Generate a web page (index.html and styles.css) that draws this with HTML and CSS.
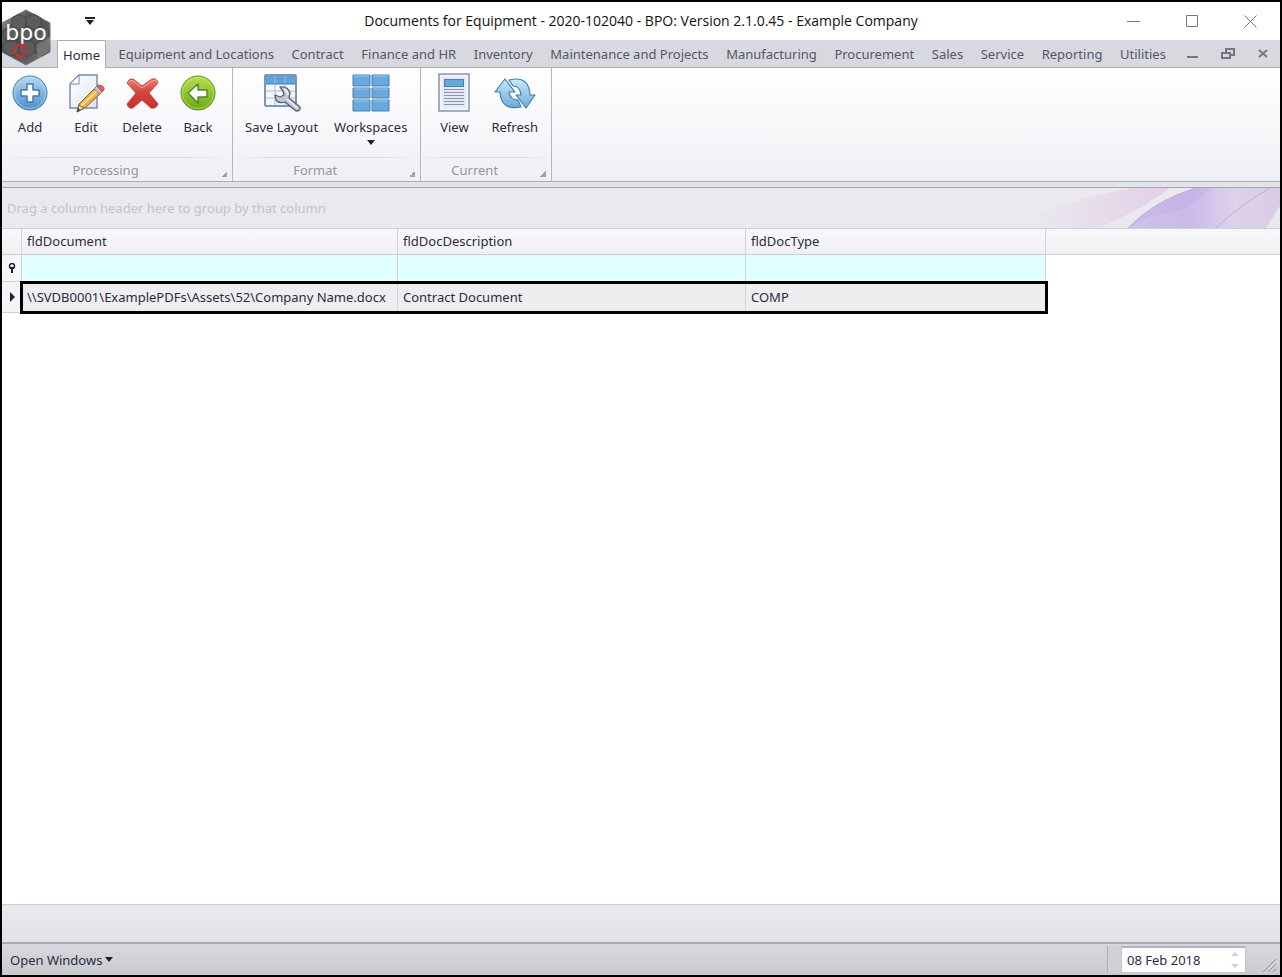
FILE: index.html
```html
<!DOCTYPE html>
<html lang="en">
  <head>
    <meta charset="UTF-8" />
    <meta name="viewport" content="width=device-width, initial-scale=1.0" />
    <title>Documents for Equipment</title>
    <link rel="stylesheet" href="styles.css">
  </head>
  <body>
    <div class="window">
      <header class="titlebar">
        <svg class="logo" viewBox="0 0 50 58">
          <defs>
            <linearGradient id="hex" x1="0" y1="0" x2="1" y2="1">
              <stop offset="0" stop-color="#999" />
              <stop offset="0.4" stop-color="#484848" />
              <stop offset="1" stop-color="#777" />
            </linearGradient>
          </defs>
          <path d="M24 1L48 14V43L24 56L0 43V14Z" fill="url(#hex)" stroke="#777" />
          <g fill="#5c5c5c" stroke="#484848">
            <path d="M17 5l7 4v8l-7 4l-7-4v-8zM32 5l7 4v8l-7 4l-8-4v-8zM9 31l8 4v8l-8 4l-8-5v-7zM25 31l8 4v8l-8 5l-8-5v-8zM40 31l7 4v8l-7 4l-7-4v-8zM9 17l7 4v8l-7 4l-8-4v-8zM25 17l7 4v8l-7 4l-8-4v-8zM40 17l7 4v8l-7 4l-7-4v-8z" />
          </g>
          <path d="M24 56L48 43V27L35 36V50Z" fill="#999" opacity="0.4" />
          <text class="logo-text" x="24" y="31">bpo</text>
          <path d="M18 35l6 3v6l-6 4l-5-4v-6z" fill="none" stroke="#d12a2d" stroke-width="2" />
        </svg>
        <button class="quick" aria-label="Customize toolbar">
          <svg width="10" height="8"><path d="M0 1h10" stroke="#1f1f35" stroke-width="2" /><path d="M1 3h8L5 8z" fill="#1f1f35" /></svg>
        </button>
        <h1>Documents for Equipment - 2020-102040 - BPO: Version 2.1.0.45 - Example Company</h1>
        <div class="window-buttons">
          <button aria-label="Minimize"><svg width="13" height="13"><path d="M0 6.500h13" /></svg></button>
          <button aria-label="Maximize"><svg width="13" height="13"><path d="M.5.5h11v11H.5z" /></svg></button>
          <button aria-label="Close"><svg width="13" height="13"><path d="M.5.5l12 12M12.500.5l-12 12" /></svg></button>
        </div>
      </header>

      <nav class="tabs">
        <div class="tab-list">
          <a class="tab active" href="#">Home</a>
          <a class="tab" href="#">Equipment and Locations</a>
          <a class="tab" href="#">Contract</a>
          <a class="tab" href="#">Finance and HR</a>
          <a class="tab" href="#">Inventory</a>
          <a class="tab" href="#">Maintenance and Projects</a>
          <a class="tab" href="#">Manufacturing</a>
          <a class="tab" href="#">Procurement</a>
          <a class="tab" href="#">Sales</a>
          <a class="tab" href="#">Service</a>
          <a class="tab" href="#">Reporting</a>
          <a class="tab" href="#">Utilities</a>
        </div>
        <div class="child-buttons">
          <button aria-label="Minimize document"><svg width="14" height="12"><path d="M1 9h11" /></svg></button>
          <button aria-label="Restore document"><svg width="14" height="12"><path d="M5 4V1h8v6H9M1 5h8v5H1z" /></svg></button>
          <button aria-label="Close document"><svg width="14" height="12"><path d="M3 2l8 7M11 2L3 9" /></svg></button>
        </div>
      </nav>

      <section class="ribbon">
        <div class="group">
          <div class="tools">
            <button class="tool">
              <svg viewBox="0 0 36 36">
                <defs><linearGradient id="blue" x1="0" y1="0" x2="0" y2="1"><stop offset="0" stop-color="#b5daf2" /><stop offset="1" stop-color="#4a8dce" /></linearGradient></defs>
                <circle cx="18" cy="18" r="17" fill="url(#blue)" stroke="#477eb0" />
                <circle cx="18" cy="18" r="15.500" fill="none" stroke="#c3e2f5" opacity="0.6" />
                <path d="M15 9h6v6h6v6h-6v6h-6v-6H9v-6h6z" fill="#fff" stroke="#4479aa" stroke-width="1.500" stroke-linejoin="round" />
              </svg>
              <span>Add</span>
            </button>
            <button class="tool">
              <svg viewBox="0 0 36 36">
                <defs><linearGradient id="paper" x1="0" y1="0" x2="1" y2="1"><stop offset="0" stop-color="#fff" /><stop offset="1" stop-color="#dde5f4" /></linearGradient></defs>
                <path d="M11 0h18v33H2V9z" fill="url(#paper)" stroke="#7486b5" stroke-width="1.400" />
                <path d="M11 0v9H2z" fill="#fff" stroke="#7486b5" />
                <path d="M9 37l2-8L27 13l6 5L17 33z" fill="#edab42" stroke="#8c642a" />
                <path d="M13 31L29 16" stroke="#ffdf93" stroke-width="2" />
                <path d="M26 14l3-3l6 5l-3 3z" fill="#b9c8df" stroke="#7282a1" />
                <path d="M29 11l2-1q6 1 5 5l-2 2z" fill="#df6553" stroke="#bd4e43" />
                <path d="M11 30l5 3l-7 4z" fill="#efd6ad" stroke="#776653" />
                <path d="M9 37l1-4l2 2z" fill="#333" />
              </svg>
              <span>Edit</span>
            </button>
            <button class="tool">
              <svg viewBox="0 0 36 36">
                <defs><linearGradient id="red" x1="0" y1="0" x2="0" y2="1"><stop offset="0" stop-color="#ed7e72" /><stop offset="0.450" stop-color="#d4453e" /><stop offset="1" stop-color="#c72f2b" /></linearGradient></defs>
                <path d="M3 8Q5 3 9 4L18 11L28 4Q33 3 34 8L25 18L34 29Q32 34 27 33L18 25L9 33Q4 34 3 29L12 18Z" fill="url(#red)" stroke="#bd4943" />
                <path d="M4 8Q6 4 9 6l9 7l10-7q4-2 5 2" fill="none" stroke="#f3a99e" />
              </svg>
              <span>Delete</span>
            </button>
            <button class="tool">
              <svg viewBox="0 0 36 36">
                <defs><linearGradient id="green" x1="0" y1="0" x2="0" y2="1"><stop offset="0" stop-color="#b7df52" /><stop offset="1" stop-color="#68a815" /></linearGradient></defs>
                <circle cx="18" cy="18" r="17" fill="url(#green)" stroke="#659425" />
                <circle cx="18" cy="18" r="15.500" fill="none" stroke="#cdea78" opacity="0.6" />
                <path d="M8 18L18 9v6h9v7h-9v6z" fill="#fff" stroke="#55831b" stroke-width="1.400" stroke-linejoin="round" />
              </svg>
              <span>Back</span>
            </button>
          </div>
          <div class="group-name"><span>Processing</span><button aria-label="Processing options"></button></div>
        </div>

        <div class="group">
          <div class="tools">
            <button class="tool">
              <svg viewBox="0 0 36 36">
                <rect x="1" y="0" width="31" height="31" rx="1" fill="#f4f7fc" stroke="#5473a4" stroke-width="1.500" />
                <path d="M2 1h29v8H2z" fill="#5ea3d9" />
                <path d="M2 16h29M2 23h29M11 1v29M21 1v29" stroke="#a9bbd8" />
                <path d="M2 9h29" stroke="#477eb4" />
                <path d="M16 12q8-1 10 6l-1 5l11 9q1 4-4 4L21 27q-6 2-9-2l-1-5l5 2l4-2l-1-4z" fill="#c3c9d2" stroke="#59616f" stroke-width="1.300" stroke-linejoin="round" />
                <path d="M23 24l10 9M20 14q4 2 4 6" fill="none" stroke="#eef1f4" stroke-width="1.500" />
              </svg>
              <span>Save Layout</span>
            </button>
            <button class="tool">
              <svg viewBox="0 0 36 36">
                <path d="M0 0h17v11H0zM19 0h17v11H19zM0 13h17v10H0zM19 13h17v10H19zM0 25h17v11H0zM19 25h17v11H19z" fill="#69a8da" stroke="#477fb7" />
                <path d="M1 1h15M20 1h15M1 14h15M20 14h15M1 26h15M20 26h15" stroke="#9acbea" />
              </svg>
              <span>Workspaces</span>
              <i class="caret"></i>
            </button>
          </div>
          <div class="group-name"><span>Format</span><button aria-label="Format options"></button></div>
        </div>

        <div class="group">
          <div class="tools">
            <button class="tool">
              <svg viewBox="0 0 36 36">
                <rect x="3" y="-1" width="30" height="37" fill="#e4e9f3" stroke="#8995b4" stroke-width="1.500" />
                <rect x="5" y="1" width="26" height="33" fill="none" stroke="#fff" />
                <rect x="8.500" y="4.500" width="19" height="7" fill="#64a9dc" stroke="#4583b5" />
                <path d="M8 14.500h20M8 17.500h20M8 20.500h20M8 23.500h20M8 26.500h20M8 29.500h20" stroke="#8892ae" />
              </svg>
              <span>View</span>
            </button>
            <button class="tool">
              <svg class="refresh" viewBox="0 0 40 36">
                <defs><linearGradient id="sky" x1="0" y1="0" x2="0" y2="1"><stop offset="0" stop-color="#c9e9f8" /><stop offset="1" stop-color="#6bacd9" /></linearGradient></defs>
                <g fill="url(#sky)" stroke="#477fae" stroke-width="1.200" stroke-linejoin="round">
                  <path d="M10 4L20 17H14Q15 25 23 25L26 32Q6 36 5 17H0Z" />
                  <path d="M31 33L21 20H26Q25 11 18 11L14 5Q34 0 35 20H40Z" />
                </g>
              </svg>
              <span>Refresh</span>
            </button>
          </div>
          <div class="group-name"><span>Current</span><button aria-label="Current options"></button></div>
        </div>
      </section>

      <main class="grid">
        <div class="group-panel">
          <span>Drag a column header here to group by that column</span>
          <svg class="ribbons" viewBox="0 0 280 40" preserveAspectRatio="none" aria-hidden="true">
            <defs>
              <linearGradient id="pink" x1="0" x2="1"><stop offset="0.200" stop-color="#e9e9ee" /><stop offset="1" stop-color="#e4cfe7" /></linearGradient>
              <linearGradient id="violet" x1="0" x2="1"><stop offset="0" stop-color="#cfc3eb" /><stop offset="0.400" stop-color="#cbb9e8" /><stop offset="0.700" stop-color="#ddd2ea" /><stop offset="1" stop-color="#dacbe6" /></linearGradient>
            </defs>
            <path d="M0 40Q70 12 130 0h40Q132 28 96 40z" fill="url(#pink)" />
            <path d="M128 40Q155 12 196 0h84v18l-14 22z" fill="url(#violet)" />
            <path d="M150 29Q190 24 211 0h-17Q157 12 128 40z" fill="#bea7e4" opacity="0.3" />
            <path d="M216 40Q241 16 270 0M128 40Q155 12 196 0" fill="none" stroke="#c3aadc" />
          </svg>
        </div>
        <table>
          <colgroup>
            <col class="col-indicator"><col class="col-document"><col class="col-description"><col class="col-type"><col>
          </colgroup>
          <thead>
            <tr><th></th><th>fldDocument</th><th>fldDocDescription</th><th>fldDocType</th><th class="rest"></th></tr>
          </thead>
          <tbody>
            <tr class="filter">
              <td class="indicator"><svg width="8" height="10"><circle cx="4" cy="3" r="2.500" fill="none" stroke="#1f1f35" stroke-width="1.500" /><path d="M1 4h6L4 7z" fill="#1f1f35" /><path d="M4 5v5" stroke="#1f1f35" stroke-width="2" /></svg></td>
              <td><input aria-label="Filter fldDocument"></td>
              <td><input aria-label="Filter fldDocDescription"></td>
              <td><input aria-label="Filter fldDocType"></td>
              <td class="rest"></td>
            </tr>
            <tr class="selected">
              <td class="indicator"><svg width="8" height="10"><path d="M2 0l5 5l-5 5z" fill="#1f1f35" /></svg></td>
              <td>\\SVDB0001\ExamplePDFs\Assets\52\Company Name.docx</td>
              <td>Contract Document</td>
              <td>COMP</td>
              <td class="rest"></td>
            </tr>
          </tbody>
        </table>
      </main>

      <div class="bottom-panel"></div>
      <footer class="statusbar">
        <button class="open-windows">Open Windows <i class="caret"></i></button>
        <div class="date">
          <input type="text" value="08 Feb 2018" aria-label="Date">
          <div class="spin">
            <button aria-label="Next day"></button>
            <button aria-label="Previous day"></button>
          </div>
        </div>
        <svg class="grip" width="15" height="15"><path d="M1 14L14 1M6 14l8-8M11 14l3-3" /></svg>
      </footer>
    </div>
  </body>
</html>
```
FILE: styles.css
```css
* {
  box-sizing: border-box;
}

body {
  margin: 0;
  font-family: "Noto Sans", "Open Sans", sans-serif;
  font-size: 13px;
  color: #2b2b42;
}

button,
input {
  font: inherit;
  color: inherit;
  background: none;
  border: none;
  padding: 0;
  margin: 0;
}

svg {
  display: block;
}

.window {
  display: flex;
  flex-direction: column;
  height: 100vh;
  border: 2px solid #000;
  background: #fff;
}

/* title bar */
.titlebar {
  position: relative;
  display: grid;
  grid-template-columns: 176px 1fr 176px;
  align-items: center;
  height: 38px;
}

.titlebar h1 {
  margin: 0;
  padding-bottom: 2px;
  font-family: "Open Sans", sans-serif;
  font-size: 14px;
  font-weight: normal;
  text-align: center;
  white-space: nowrap;
  color: #111;
}

.logo {
  position: absolute;
  left: 0;
  top: 7px;
  width: 50px;
  height: 58px;
  z-index: 1;
}

.logo-text {
  font-family: "DejaVu Sans", sans-serif;
  font-size: 22px;
  text-anchor: middle;
  fill: #fff;
}

.quick {
  justify-self: center;
}

.window-buttons {
  display: flex;
}

.window-buttons button {
  display: flex;
  flex: 1;
  justify-content: center;
}

.window-buttons path {
  fill: none;
  stroke: #777;
}

/* tabs */
.tabs {
  display: flex;
  justify-content: space-between;
  height: 28px;
  padding-left: 55px;
  background: #d8d9df;
  border-bottom: 1px solid #acadb9;
}

.tab-list {
  display: flex;
  flex: 1;
  justify-content: space-between;
  max-width: 1114px;
}

.tab {
  padding: 0 5px;
  line-height: 28px;
  color: #55556b;
  text-decoration: none;
  white-space: nowrap;
}

.tab.active {
  height: 28px;
  background: #fff;
  border: 1px solid #acadb9;
  border-bottom: none;
  color: #2b2b42;
}

.child-buttons {
  display: flex;
  align-items: center;
  gap: 21px;
  padding-right: 10px;
}

.child-buttons path {
  fill: none;
  stroke: #74758a;
  stroke-width: 2;
}

/* ribbon */
.ribbon {
  display: flex;
  height: 114px;
  background: linear-gradient(#fff, #f8f8fb 50%, #efeff4);
  border-bottom: 1px solid #a9abb2;
}

.group {
  display: flex;
  flex-direction: column;
  border-right: 1px solid #b5b6c2;
}

.tools {
  display: flex;
  flex: 1;
  gap: 2px;
  padding: 7px 6px 0 5px;
}

.group:first-child .tools {
  gap: 0;
  padding-left: 0;
}

.tool {
  display: flex;
  flex-direction: column;
  align-items: center;
  min-width: 56px;
  padding: 0 7px;
  white-space: nowrap;
}

.tool svg {
  width: 36px;
  height: 36px;
  overflow: visible;
}

.tool .refresh {
  width: 40px;
}

.tool span {
  margin-top: 7px;
  line-height: 18px;
}

.caret {
  border: 4px solid transparent;
  border-top: 5px solid #1f1f35;
  border-bottom: none;
}

.tool .caret {
  margin-top: 4px;
}

.group-name {
  display: flex;
  height: 24px;
  line-height: 24px;
  text-align: center;
  color: #93949f;
  border-top: 1px solid;
  border-image: linear-gradient(90deg, transparent, #dcdde3 20%, #dcdde3 80%, transparent) 1;
}

.group-name span {
  flex: 1;
}

.group-name button {
  align-self: flex-end;
  width: 6px;
  height: 6px;
  margin: 0 5px 4px 12px;
  background: linear-gradient(135deg, transparent 50%, #a0a1aa 50%);
}

/* data grid */
.grid {
  flex: 1;
  border-top: 1px solid #a4a6ae;
  margin-top: 5px;
  box-shadow: 0 -5px #e3e4e8;
}

.group-panel {
  display: flex;
  align-items: center;
  justify-content: space-between;
  height: 40px;
  padding-left: 5px;
  background: #e9e9ee;
  color: #c2c3cc;
}

.ribbons {
  width: 280px;
  height: 40px;
}

table {
  width: 100%;
  table-layout: fixed;
  border-collapse: separate;
  border-spacing: 0;
}

.col-indicator {
  width: 20px;
}

.col-document {
  width: 376px;
}

.col-description {
  width: 348px;
}

.col-type {
  width: 300px;
}

th,
td {
  height: 27px;
  padding: 0 5px;
  text-align: left;
  font-weight: normal;
  white-space: nowrap;
  border-right: 1px solid #d0d1dc;
  border-bottom: 1px solid #cdced8;
}

th {
  padding-bottom: 2px;
  background: linear-gradient(#f8f8fa, #f0f0f3);
  border-top: 1px solid #cdced8;
}

th.rest {
  border-right: none;
}

.filter td {
  padding: 0;
  background: #e0ffff;
}

.filter input {
  display: block;
  width: 100%;
  height: 26px;
  padding: 0 5px;
}

.selected td {
  height: 31px;
  background: #eeeef1;
}

.filter .rest,
.selected .rest {
  background: #fff;
  border: none;
}

.filter .indicator,
.selected .indicator {
  position: relative;
  padding: 0 6px;
  background: #f5f5f8;
}

/* frame around the focused row */
.selected .indicator::after {
  content: "";
  position: absolute;
  left: 18px;
  top: -1px;
  box-sizing: border-box;
  width: 1028px;
  height: 33px;
  border: 3px solid #000;
}

/* footer */
.bottom-panel {
  height: 38px;
  background: linear-gradient(#eaeaee, #e2e2e7);
  border-top: 1px solid #cdced6;
}

.statusbar {
  display: flex;
  align-items: center;
  height: 33px;
  padding: 0 0 0 8px;
  background: linear-gradient(#d8d9de, #c9cad0);
  border-top: 2px solid #a9aab5;
}

.open-windows {
  display: flex;
  align-items: center;
  gap: 3px;
  margin-right: auto;
}

.date {
  display: flex;
  width: 125px;
  height: 27px;
  background: #fff;
  border: 1px solid #c4c5ce;
  border-top: 2px solid #b4b5c0;
  box-shadow: -13px 0 #d0d1d6, -14px 0 #adaeb8;
}

.date input {
  flex: 1;
  min-width: 0;
  padding-left: 5px;
}

.spin {
  display: flex;
  flex-direction: column;
  justify-content: center;
  gap: 8px;
  width: 14px;
}

.spin button {
  width: 8px;
  height: 4px;
  background: #cfd0d6;
  clip-path: polygon(50% 0, 100% 100%, 0 100%);
}

.spin button:last-child {
  clip-path: polygon(0 0, 100% 0, 50% 100%);
}

.grip {
  align-self: flex-end;
  margin: 0 3px 2px 16px;
}

.grip path {
  stroke: #92939d;
  stroke-width: 1;
}
```
